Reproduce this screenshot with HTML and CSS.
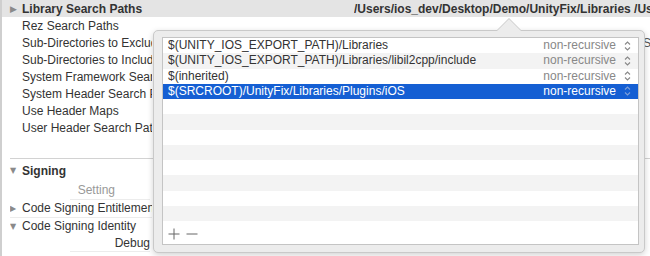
FILE: index.html
```html
<!DOCTYPE html>
<html>
<head>
<meta charset="utf-8">
<link rel="stylesheet" href="styles.css">
</head>
<body>
<div class="page">
  <div class="header">
    <div class="hleft"><span class="tri">&#9654;</span><span class="hname">Library Search Paths</span></div>
    <div class="hval">/Users/ios_dev/Desktop/Demo/UnityFix/Libraries /Users/ios_dev/Desktop/Demo</div>
  </div>
  <div class="list">
    <div class="row">Rez Search Paths</div>
    <div class="row">Sub-Directories to Exclude</div>
    <div class="row">Sub-Directories to Include</div>
    <div class="row">System Framework Search Paths</div>
    <div class="row">System Header Search Paths</div>
    <div class="row">Use Header Maps</div>
    <div class="row">User Header Search Paths</div>
  </div>
  <div class="section">
    <div class="sechead"><span class="tri small">&#9660;</span><span class="hname">Signing</span></div>
    <div class="colhead">Setting</div>
    <div class="row2"><span class="tri small">&#9654;</span>Code Signing Entitlements</div>
    <div class="row2 lined"><span class="tri small">&#9660;</span>Code Signing Identity</div>
    <div class="row3">Debug</div>
  </div>
  <div class="edge-right">
    <div class="frag">St</div>
  </div>

  <div class="popover">
    <div class="arrow"></div>
    <div class="table">
      <div class="trow"><span class="path">$(UNITY_IOS_EXPORT_PATH)/Libraries</span><span class="mode">non-recursive</span><span class="chev"><svg width="7" height="10" viewBox="0 0 7 10"><path d="M1 3.5 L3.5 1 L6 3.5 M1 6.5 L3.5 9 L6 6.5" fill="none" stroke="currentColor" stroke-width="1.1"/></svg></span></div>
      <div class="trow"><span class="path">$(UNITY_IOS_EXPORT_PATH)/Libraries/libil2cpp/include</span><span class="mode">non-recursive</span><span class="chev"><svg width="7" height="10" viewBox="0 0 7 10"><path d="M1 3.5 L3.5 1 L6 3.5 M1 6.5 L3.5 9 L6 6.5" fill="none" stroke="currentColor" stroke-width="1.1"/></svg></span></div>
      <div class="trow"><span class="path">$(inherited)</span><span class="mode">non-recursive</span><span class="chev"><svg width="7" height="10" viewBox="0 0 7 10"><path d="M1 3.5 L3.5 1 L6 3.5 M1 6.5 L3.5 9 L6 6.5" fill="none" stroke="currentColor" stroke-width="1.1"/></svg></span></div>
      <div class="trow sel"><span class="path">$(SRCROOT)/UnityFix/Libraries/Plugins/iOS</span><span class="mode">non-recursive</span><span class="chev"><svg width="7" height="10" viewBox="0 0 7 10"><path d="M1 3.5 L3.5 1 L6 3.5 M1 6.5 L3.5 9 L6 6.5" fill="none" stroke="currentColor" stroke-width="1.1"/></svg></span></div>
      <div class="trow"></div>
      <div class="trow"></div>
      <div class="trow"></div>
      <div class="trow"></div>
      <div class="trow"></div>
      <div class="trow"></div>
      <div class="trow"></div>
      <div class="trow"></div>
      <div class="trow"></div>
      <div class="tools">
        <svg width="12" height="12" viewBox="0 0 12 12"><path d="M6 0.5 V11.5 M0.5 6 H11.5" stroke="currentColor" stroke-width="1" fill="none"/></svg>
        <svg width="12" height="12" viewBox="0 0 12 12"><path d="M0.5 6 H11.5" stroke="currentColor" stroke-width="1" fill="none"/></svg>
      </div>
    </div>
  </div>
</div>
</body>
</html>
```

FILE: styles.css
```css
* { box-sizing: border-box; }
html, body { margin: 0; padding: 0; background: #fff; }
body {
  font-family: "Liberation Sans", Arial, sans-serif;
  font-size: 12px;
  color: #222;
  width: 650px;
  height: 256px;
  overflow: hidden;
}
.page {
  position: relative;
  width: 650px;
  height: 256px;
  border-left: 2px solid #cfcfcf;
  overflow: hidden;
}
.header {
  height: 17px;
  background: #e4e4e4;
  display: flex;
  align-items: center;
  font-weight: bold;
  white-space: nowrap;
  color: #333;
}
.hleft { width: 352px; display: flex; align-items: center; padding-left: 8px; }
.tri { color: #8a8a8a; font-size: 9px; width: 12px; flex-shrink: 0; display: inline-block; font-family: "DejaVu Sans", sans-serif; }
.tri.small { font-size: 8px; width: 12px; }
.hname { font-weight: bold; }
.hval { overflow: hidden; flex: 1; }
.list { padding-top: 1px; width: 150px; }
.row {
  height: 17px;
  line-height: 17px;
  padding-left: 20px;
  white-space: nowrap;
  overflow: hidden;
  color: #333;
}
.section {
  margin-top: 21px;
  margin-left: 8px;
  border-top: 1px solid #d2d2d2;
  width: 650px;
  padding-top: 3px;
}
.sechead { height: 18px; line-height: 18px; display: flex; align-items: center; font-weight: bold; color: #333; }
.colhead {
  height: 20px;
  line-height: 20px;
  margin-left: 60px;
  width: 80px;
  padding-right: 35px;
  text-align: right;
  color: #999;
  border-bottom: 1px solid #ececec;
}
.row2 { height: 17px; line-height: 17px; white-space: nowrap; color: #333; width: 142px; overflow: hidden; display: flex; align-items: center; }
.lined { border-top: 1px solid #ececec; }
.row3 { height: 18px; line-height: 18px; text-align: right; color: #333; border-bottom: 1px solid #ececec; margin-left: 60px; width: 80px; }
.edge-right { position: absolute; left: 641px; top: 36px; }
.frag { color: #555; font-size: 12px; }

.popover {
  position: absolute;
  left: 151px;
  top: 30px;
  width: 492px;
  height: 223px;
  background: #ececec;
  border: 1px solid #c9c9c9;
  border-radius: 5px;
  box-shadow: 0 2px 6px rgba(0,0,0,0.18);
  padding: 6px 5px 8px 8px;
}
.arrow {
  position: absolute;
  left: 342px;
  top: -13px;
  width: 0; height: 0;
  border-left: 13px solid transparent;
  border-right: 13px solid transparent;
  border-bottom: 13px solid #c9c9c9;
}
.arrow::after {
  content: "";
  position: absolute;
  left: -12px;
  top: 1px;
  border-left: 12px solid transparent;
  border-right: 12px solid transparent;
  border-bottom: 12px solid #ececec;
}
.table {
  position: relative;
  background: #fff;
  border: 1px solid #c4c4c4;
  height: 208px;
  overflow: hidden;
}
.trow {
  height: 15.25px;
  line-height: 15px;
  display: flex;
  align-items: center;
  padding-left: 5px;
  color: #333;
  white-space: nowrap;
}
.trow:nth-child(even) { background: #f3f3f3; }
.trow.sel { background: #155fd3; color: #fff; }
.path { flex: 1; }
.mode { color: #888; width: 80px; text-align: right; }
.sel .mode { color: #fff; }
.chev { width: 22px; display: flex; justify-content: center; color: #888; }
.sel .chev { color: #7e9fd8; }
.tools {
  position: absolute;
  left: 5px;
  bottom: 4px;
  display: flex;
  gap: 6px;
  color: #666;
}
```
